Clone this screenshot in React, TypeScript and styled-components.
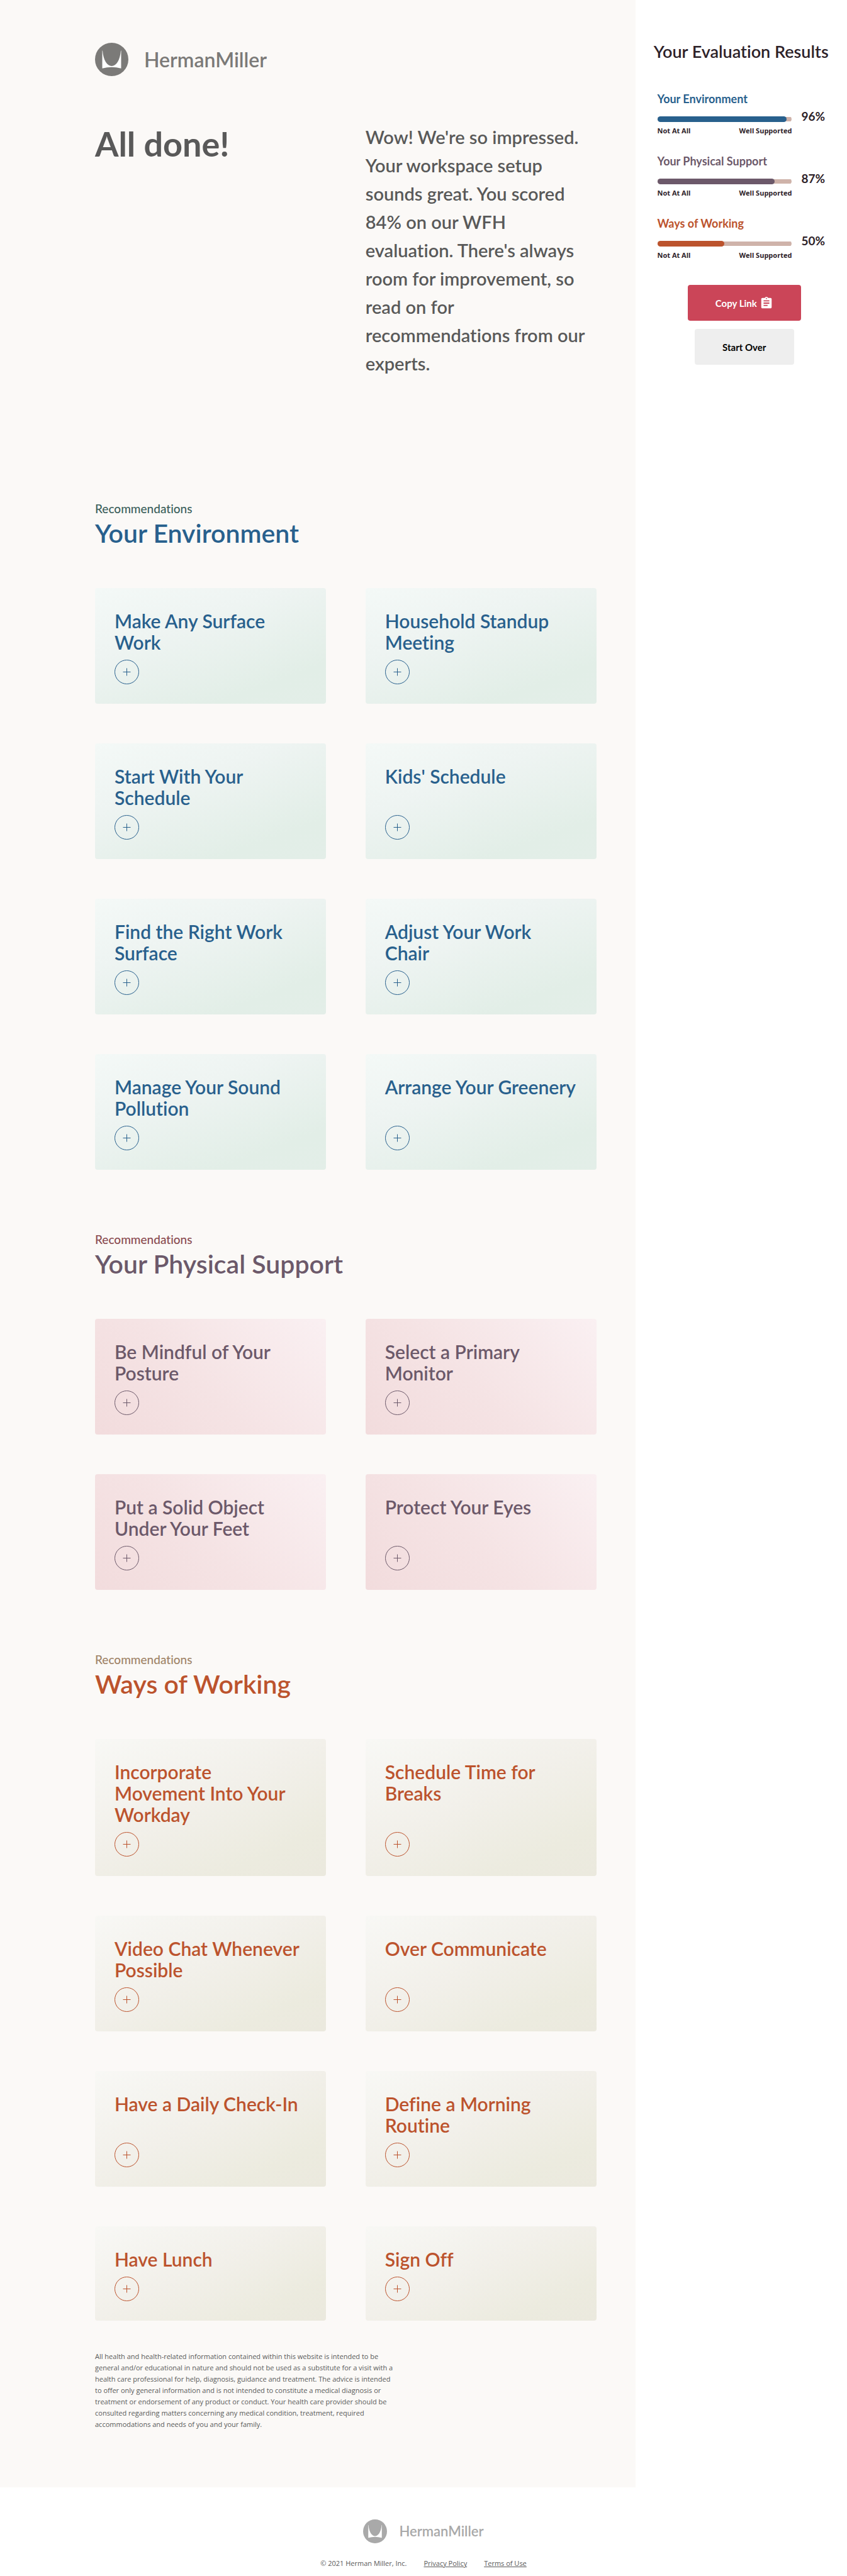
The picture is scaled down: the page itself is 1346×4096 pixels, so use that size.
import React from 'react';
import styled, { createGlobalStyle } from 'styled-components';
import { MdAssignment } from 'react-icons/md';

const GlobalStyle = createGlobalStyle`
  *, *::before, *::after { box-sizing: border-box; }
  body {
    margin: 0;
    background: #fff;
    color: #595959;
    font-family: Lato, 'Open Sans', sans-serif;
    font-variant-ligatures: no-common-ligatures;
  }
  h1, h2, h3, p { margin: 0; padding: 0; }
`;

type Tone = 'environment' | 'physical' | 'working';

const tones: Record<Tone, { ink: string; eyebrow: string; surface: string }> = {
  environment: {
    ink: '#28608d',
    eyebrow: '#3b5f5b',
    surface: 'linear-gradient(160deg, #f4f9f7 0%, #eef4f2 35%, #e2eee7 80%, #e3eee8 100%)',
  },
  physical: {
    ink: '#6c596a',
    eyebrow: '#8a4b50',
    surface: 'linear-gradient(45deg, #f2dcdd 0%, #f5e3e4 45%, #faf0f2 100%)',
  },
  working: {
    ink: '#bc532d',
    eyebrow: '#a08468',
    surface: 'linear-gradient(155deg, #f8f8f5 0%, #f2f0ea 45%, #ecebdf 80%, #ebe9de 100%)',
  },
};

const Layout = styled.div`
  display: grid;
  grid-template-columns: 3fr 1fr;
`;

const Main = styled.main`
  padding: 68px 62px 91px 151px;
  background: #fbf9f7;
`;

const LogoLink = styled.a<{ $small?: boolean }>`
  display: inline-flex;
  align-items: center;
  gap: ${(p) => (p.$small ? 19 : 25)}px;
  color: ${(p) => (p.$small ? '#a9a9a9' : '#7b7a78')};
  font-size: ${(p) => (p.$small ? 22 : 32)}px;
  font-weight: 600;
  line-height: 1;
  text-decoration: none;
  vertical-align: top;

  svg {
    width: ${(p) => (p.$small ? 38 : 53)}px;
    height: ${(p) => (p.$small ? 38 : 53)}px;
  }
`;

const TwoColumns = styled.div`
  display: grid;
  grid-template-columns: 1fr 1fr;
  gap: 63px;
`;

const Intro = styled(TwoColumns)`
  margin-top: 74px;
`;

const Headline = styled.h1`
  font-size: 54px;
  font-weight: 700;
  line-height: 68px;
`;

const Lead = styled.p`
  font-size: 29px;
  font-weight: 600;
  line-height: 45px;
`;

const Section = styled.section<{ $first?: boolean }>`
  margin-top: ${(p) => (p.$first ? 197 : 99)}px;
`;

const Eyebrow = styled.p<{ $tone: Tone }>`
  color: ${(p) => tones[p.$tone].eyebrow};
  font-size: 19px;
  font-weight: 500;
  line-height: 24px;
`;

const SectionTitle = styled.h2<{ $tone: Tone }>`
  margin: 3px 0 63px;
  color: ${(p) => tones[p.$tone].ink};
  font-size: 41px;
  font-weight: 600;
  line-height: 48px;
`;

const Card = styled.article<{ $tone: Tone }>`
  display: flex;
  flex-direction: column;
  align-items: flex-start;
  gap: 11px;
  padding: 35px 24px 31px 31px;
  border-radius: 4px;
  background: ${(p) => tones[p.$tone].surface};
  color: ${(p) => tones[p.$tone].ink};
`;

const CardTitle = styled.h3`
  font-size: 30px;
  font-weight: 600;
  line-height: 34px;
  white-space: pre-line;
`;

const ExpandButton = styled.button`
  display: grid;
  place-items: center;
  width: 39px;
  height: 39px;
  margin-top: auto;
  padding: 0;
  border: 1px solid currentColor;
  border-radius: 50%;
  background: none;
  color: inherit;
  cursor: pointer;
`;

const Disclaimer = styled.p`
  max-width: 476px;
  margin-top: 48px;
  font-family: 'Open Sans', sans-serif;
  font-size: 11px;
  line-height: 18px;
`;

const Sidebar = styled.aside`
  padding-top: 64px;
  background: #fff;
  color: #2d2229;
`;

const SidebarTitle = styled.h2`
  margin-bottom: 45px;
  font-size: 27px;
  font-weight: 600;
  line-height: 36px;
  text-align: center;
  white-space: nowrap;
`;

const ScoreList = styled.div`
  display: grid;
  gap: 28px;
  padding: 0 35px;
`;

const ScoreName = styled.h3<{ $tone: Tone }>`
  margin-bottom: 4px;
  color: ${(p) => tones[p.$tone].ink};
  font-size: 18px;
  font-weight: 700;
  line-height: 24px;
`;

const ScoreRow = styled.div`
  display: flex;
  gap: 15px;
`;

const Gauge = styled.div`
  flex: 1;
  padding-top: 12px;
`;

const Track = styled.div`
  display: flex;
  align-items: center;
  height: 9px;
  background: linear-gradient(#cfb3aa, #cfb3aa) center / 100% 7px no-repeat;
  border-radius: 5px;
`;

const Fill = styled.div<{ $tone: Tone }>`
  height: 9px;
  border-radius: 5px;
  background: ${(p) => tones[p.$tone].ink};
`;

const Scale = styled.div`
  display: flex;
  justify-content: space-between;
  margin-top: 6px;
  font-family: 'Open Sans', sans-serif;
  font-size: 11px;
  font-weight: 700;
  line-height: 16px;
`;

const Percent = styled.strong`
  font-size: 19px;
  font-weight: 700;
  line-height: 24px;
`;

const Actions = styled.div`
  display: grid;
  justify-items: center;
  gap: 13px;
  margin-top: 39px;
  padding-left: 10px;
`;

const ActionButton = styled.button<{ $primary?: boolean }>`
  display: flex;
  align-items: center;
  justify-content: center;
  gap: 4px;
  width: ${(p) => (p.$primary ? 180 : 158)}px;
  height: 57px;
  padding: 0;
  border: 0;
  border-radius: 4px;
  background: ${(p) => (p.$primary ? '#cb4558' : '#eee')};
  color: ${(p) => (p.$primary ? '#fff' : '#000')};
  font: 700 15px Lato, sans-serif;
  cursor: pointer;
`;

const Footer = styled.footer`
  display: flex;
  flex-direction: column;
  align-items: center;
  gap: 24px;
  padding: 51px 0 12px;
`;

const Legal = styled.div`
  display: flex;
  gap: 27px;
  font-family: 'Open Sans', sans-serif;
  font-size: 11px;
  line-height: 16px;
`;

const LegalLink = styled.a`
  color: inherit;
`;

function Logo({ small }: { small?: boolean }) {
  return (
    <LogoLink href="#" $small={small}>
      <svg viewBox="0 0 76 76" aria-hidden="true">
        <circle cx="38" cy="38" r="38" fill="currentColor" />
        <path
          d="M16.5 18V58.5Q38 52.5 59.5 58.5V18H58.8C57 40 48.5 53 38 53S19 40 17.2 18Z"
          fill="#fff"
        />
      </svg>
      <span>HermanMiller</span>
    </LogoLink>
  );
}

const sections: { title: string; tone: Tone; cards: string[] }[] = [
  {
    title: 'Your Environment',
    tone: 'environment',
    cards: [
      'Make Any Surface\nWork',
      'Household Standup\nMeeting',
      'Start With Your\nSchedule',
      "Kids' Schedule",
      'Find the Right Work\nSurface',
      'Adjust Your Work\nChair',
      'Manage Your Sound\nPollution',
      'Arrange Your Greenery',
    ],
  },
  {
    title: 'Your Physical Support',
    tone: 'physical',
    cards: [
      'Be Mindful of Your\nPosture',
      'Select a Primary\nMonitor',
      'Put a Solid Object\nUnder Your Feet',
      'Protect Your Eyes',
    ],
  },
  {
    title: 'Ways of Working',
    tone: 'working',
    cards: [
      'Incorporate\nMovement Into Your\nWorkday',
      'Schedule Time for\nBreaks',
      'Video Chat Whenever\nPossible',
      'Over Communicate',
      'Have a Daily Check-In',
      'Define a Morning\nRoutine',
      'Have Lunch',
      'Sign Off',
    ],
  },
];

const scores: { name: string; tone: Tone; value: number }[] = [
  { name: 'Your Environment', tone: 'environment', value: 96 },
  { name: 'Your Physical Support', tone: 'physical', value: 87 },
  { name: 'Ways of Working', tone: 'working', value: 50 },
];

export default function App() {
  return (
    <>
      <GlobalStyle />
      <Layout>
        <Main>
          <header>
            <Logo />
          </header>
          <Intro>
            <Headline>All done!</Headline>
            <Lead>
              Wow! We're so impressed. Your workspace setup sounds great. You scored 84% on our WFH
              evaluation. There's always room for improvement, so read on for recommendations from
              our experts.
            </Lead>
          </Intro>
          {sections.map((section, index) => (
            <Section key={section.title} $first={index === 0}>
              <Eyebrow $tone={section.tone}>Recommendations</Eyebrow>
              <SectionTitle $tone={section.tone}>{section.title}</SectionTitle>
              <TwoColumns>
                {section.cards.map((title) => (
                  <Card key={title} $tone={section.tone}>
                    <CardTitle>{title}</CardTitle>
                    <ExpandButton type="button" aria-label={`Expand ${title.replace(/\n/g, ' ')}`}>
                      <svg width="13" height="13" viewBox="0 0 13 13" aria-hidden="true">
                        <path d="M6.5 0.5V12.5M0.5 6.5H12.5" stroke="currentColor" />
                      </svg>
                    </ExpandButton>
                  </Card>
                ))}
              </TwoColumns>
            </Section>
          ))}
          <Disclaimer>
            All health and health-related information contained within this website is intended to
            be general and/or educational in nature and should not be used as a substitute for a
            visit with a health care professional for help, diagnosis, guidance and treatment. The
            advice is intended to offer only general information and is not intended to constitute a
            medical diagnosis or treatment or endorsement of any product or conduct. Your health
            care provider should be consulted regarding matters concerning any medical condition,
            treatment, required accommodations and needs of you and your family.
          </Disclaimer>
        </Main>
        <Sidebar>
          <SidebarTitle>Your Evaluation Results</SidebarTitle>
          <ScoreList>
            {scores.map((score) => (
              <section key={score.name}>
                <ScoreName $tone={score.tone}>{score.name}</ScoreName>
                <ScoreRow>
                  <Gauge>
                    <Track
                      role="progressbar"
                      aria-label={score.name}
                      aria-valuenow={score.value}
                      aria-valuemin={0}
                      aria-valuemax={100}
                    >
                      <Fill $tone={score.tone} style={{ width: `${score.value}%` }} />
                    </Track>
                    <Scale>
                      <span>Not At All</span>
                      <span>Well Supported</span>
                    </Scale>
                  </Gauge>
                  <Percent>{score.value}%</Percent>
                </ScoreRow>
              </section>
            ))}
          </ScoreList>
          <Actions>
            <ActionButton type="button" $primary>
              Copy Link
              <MdAssignment size={22} aria-hidden="true" />
            </ActionButton>
            <ActionButton type="button">Start Over</ActionButton>
          </Actions>
        </Sidebar>
      </Layout>
      <Footer>
        <Logo small />
        <Legal>
          <span>© 2021 Herman Miller, Inc.</span>
          <LegalLink href="#">Privacy Policy</LegalLink>
          <LegalLink href="#">Terms of Use</LegalLink>
        </Legal>
      </Footer>
    </>
  );
}
